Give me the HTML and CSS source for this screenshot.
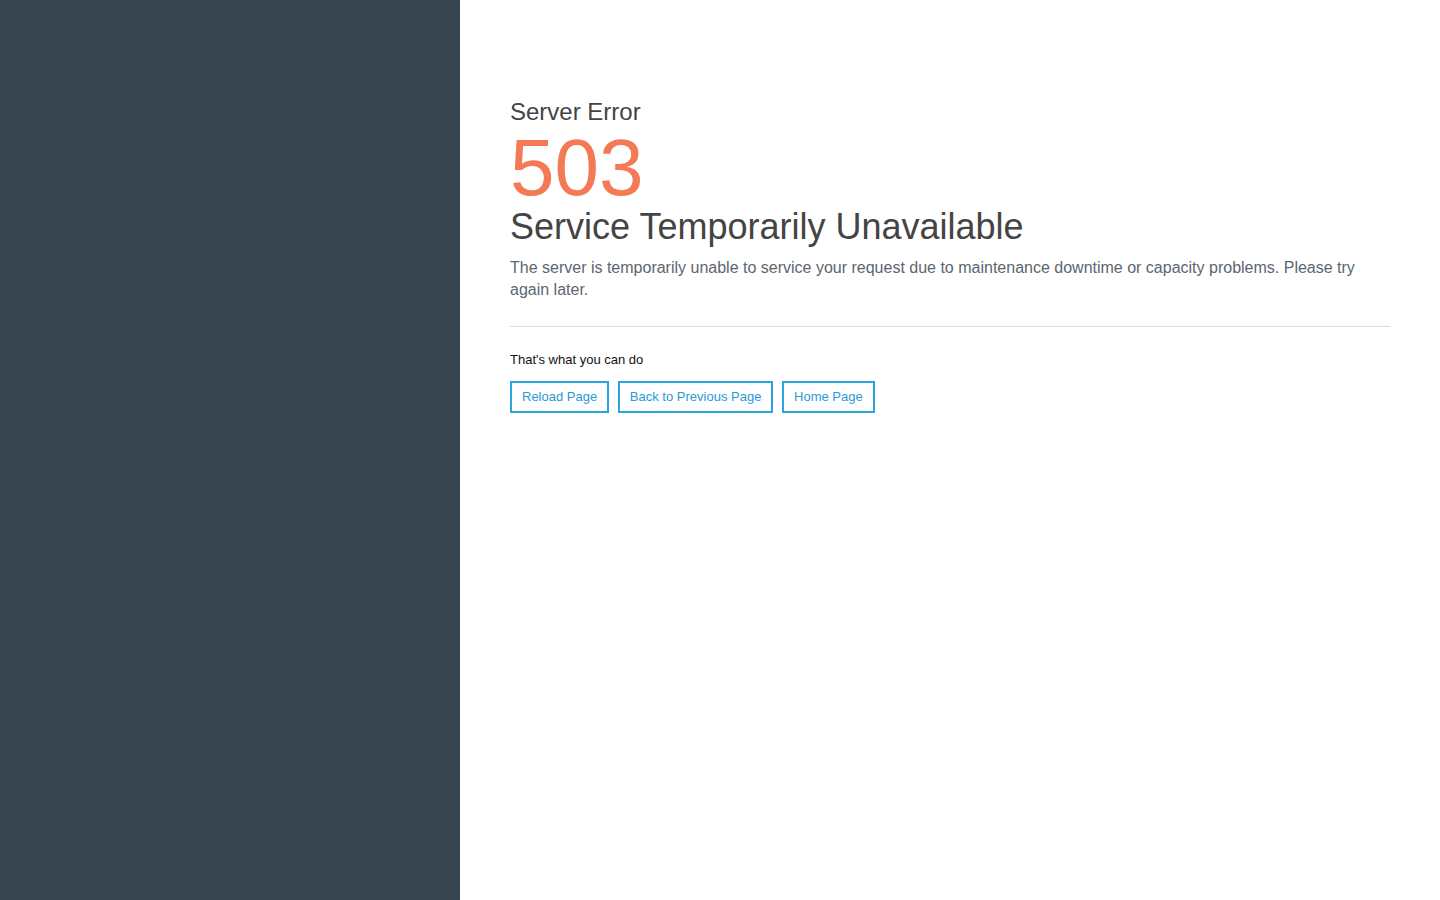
FILE: index.html
```html
<!DOCTYPE html>
<html>
<head>
<meta charset="utf-8">
<title>503 Service Temporarily Unavailable</title>
<link rel="stylesheet" href="styles.css">
</head>
<body>
<div class="layout">
  <aside class="sidebar"></aside>
  <main class="content">
    <h2 class="subtitle">Server Error</h2>
    <h1 class="code">503</h1>
    <h3 class="title">Service Temporarily Unavailable</h3>
    <p class="desc">The server is temporarily unable to service your request due to maintenance downtime or capacity problems. Please try again later.</p>
    <hr class="divider">
    <p class="hint">That's what you can do</p>
    <div class="actions">
      <a class="btn" href="#">Reload Page</a>
      <a class="btn" href="#">Back to Previous Page</a>
      <a class="btn" href="#">Home Page</a>
    </div>
  </main>
</div>
</body>
</html>
```
FILE: styles.css
```css
html, body {
  margin: 0;
  padding: 0;
  height: 100%;
}
body {
  font-family: "Liberation Sans", Arial, sans-serif;
  background: #fff;
}
.layout {
  display: flex;
  min-height: 100vh;
}
.sidebar {
  width: 460px;
  flex: none;
  background: #38444f;
}
.content {
  flex: 1;
  padding: 96px 50px 0 50px;
}
.subtitle {
  margin: 0;
  font-size: 24px;
  font-weight: normal;
  line-height: 32px;
  color: #444;
}
.code {
  margin: 0;
  font-size: 80px;
  font-weight: normal;
  line-height: 80px;
  color: #f47a55;
}
.title {
  margin: -2px 0 0;
  font-size: 36px;
  font-weight: normal;
  line-height: 42px;
  color: #444;
}
.desc {
  margin: 9px 0 0;
  font-size: 16px;
  line-height: 22px;
  color: #5c6670;
}
.divider {
  margin: 25px 0 0;
  border: 0;
  border-top: 1px solid #ddd;
}
.hint {
  margin: 25px 0 0;
  font-size: 13px;
  line-height: 16px;
  color: #111;
}
.actions {
  display: flex;
  gap: 8.7px;
  margin-top: 13px;
}
.btn {
  display: inline-block;
  padding: 0 10px;
  height: 28px;
  line-height: 28px;
  border: 2px solid #2aa4dd;
  color: #2a9bd6;
  font-size: 13px;
  text-decoration: none;
}
```
